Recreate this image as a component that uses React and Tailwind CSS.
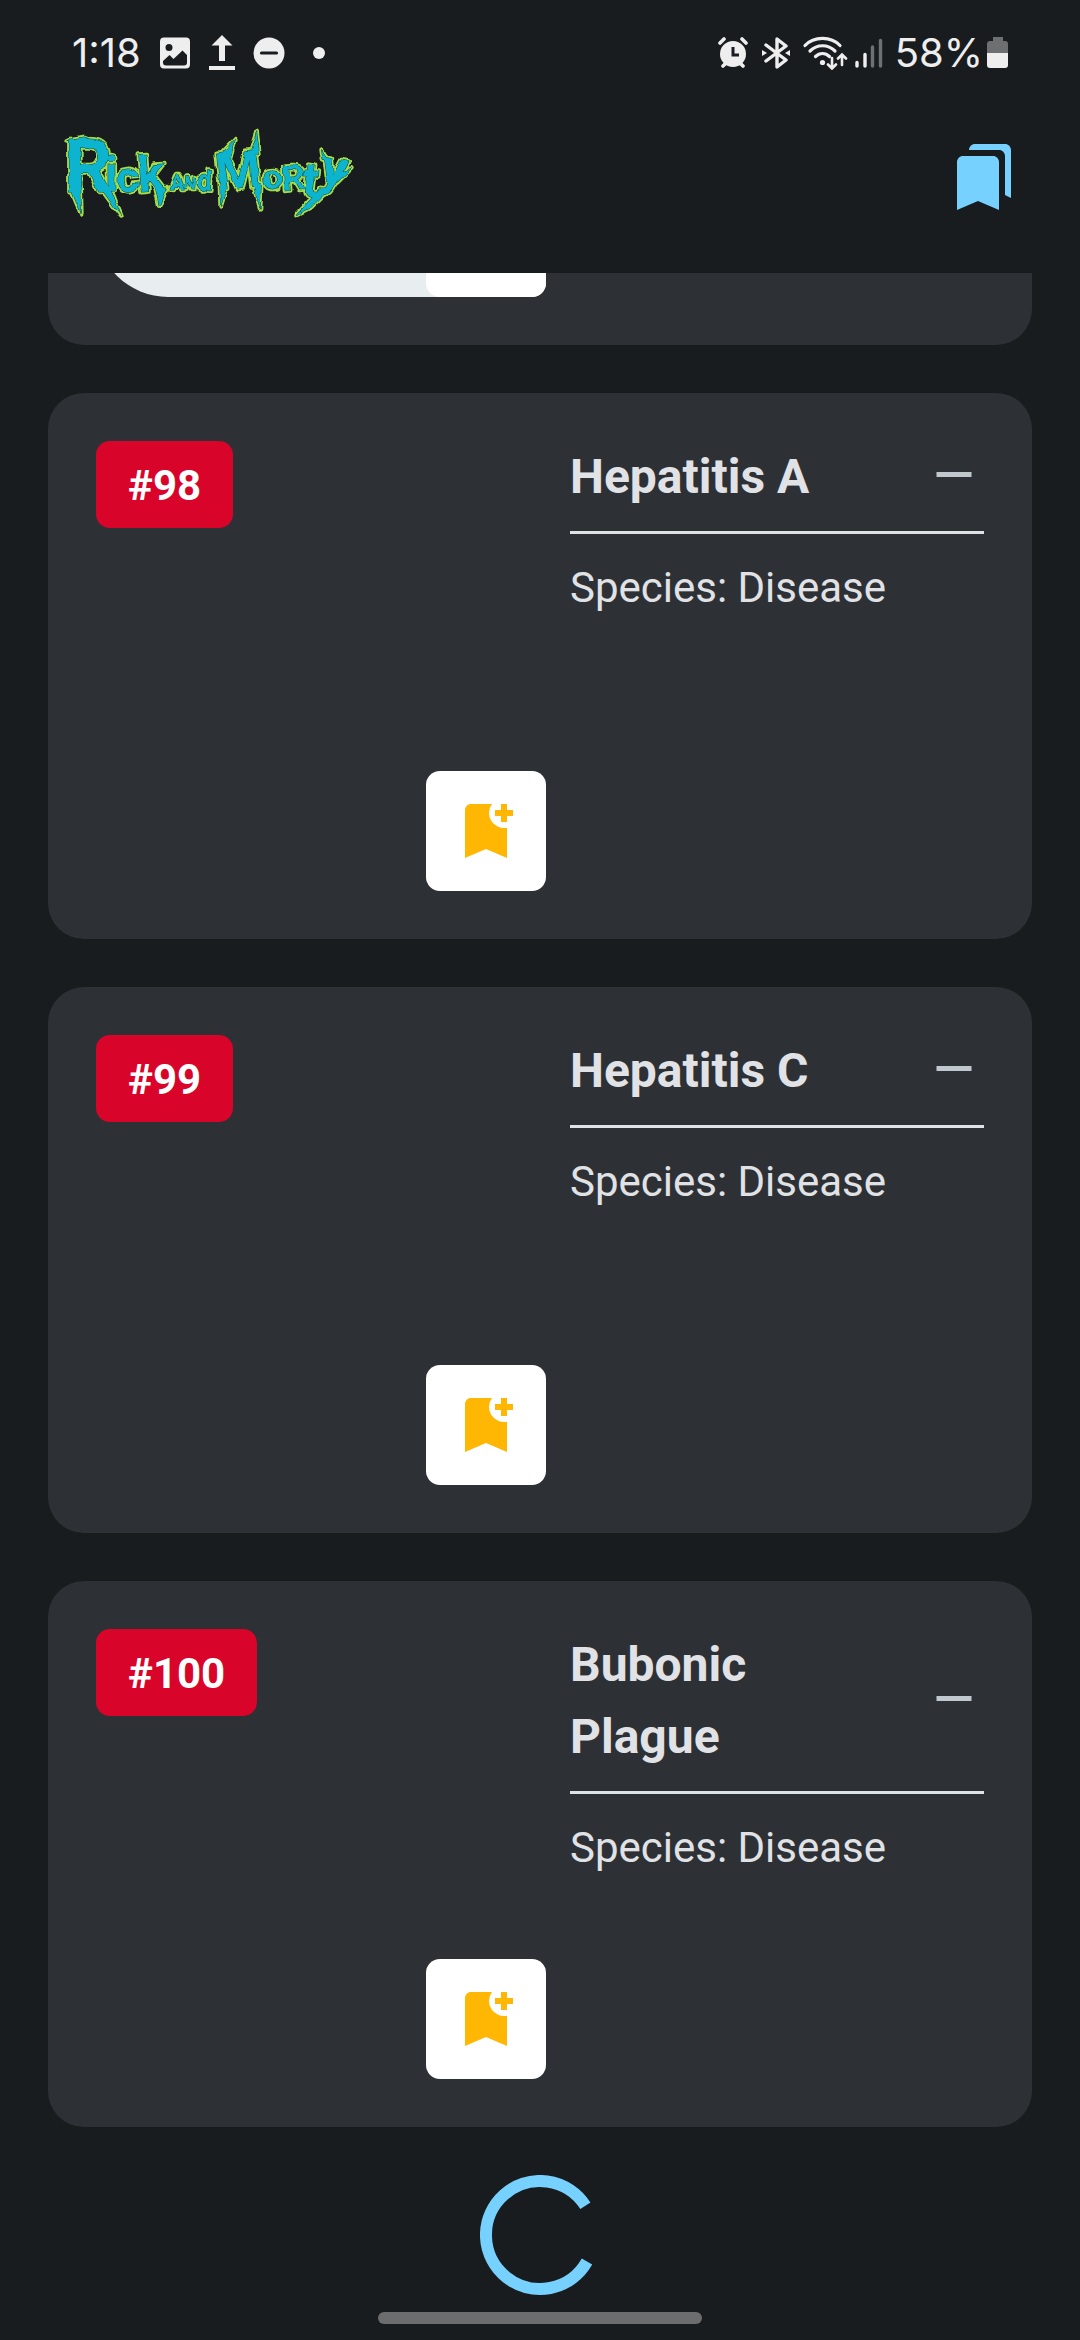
import React from "react";

const characters = [
  { id: 98, name: "Hepatitis A", species: "Disease" },
  { id: 99, name: "Hepatitis C", species: "Disease" },
  { id: 100, name: "Bubonic Plague", species: "Disease" },
];

function StatusBar() {
  return (
    <div className="flex h-[81px] items-center justify-between pt-6 pr-[71px] pl-[72px] text-[#eeeeee]">
      <div className="flex items-center">
        <span className="font-['Inter',sans-serif] text-[40px] leading-none">1:18</span>
        <svg className="ml-[18px] size-8" viewBox="0 0 32 32" aria-hidden="true">
          <path fill="currentColor" fillRule="evenodd" d="M5 0.500h22a4 4 0 0 1 4 4v23a4 4 0 0 1-4 4H5a4 4 0 0 1-4-4v-23a4 4 0 0 1 4-4zM10 7a3.500 3.500 0 1 0 0 7a3.500 3.500 0 0 0 0-7zM4 24v1.500a3 3 0 0 0 3 3h18a3 3 0 0 0 3-3V18l-4.500-4.500L14.500 22l-4-4z" />
        </svg>
        <svg className="ml-[18px] h-9 w-[26px]" viewBox="0 0 26 36" aria-hidden="true">
          <path fill="currentColor" d="M13 0l10.500 10.500H16V26h-6V10.500H2.500zM0 31h26v4H0z" />
        </svg>
        <svg className="ml-[18px] size-8" viewBox="0 0 32 32" aria-hidden="true">
          <circle cx="16" cy="16" r="15.500" fill="currentColor" />
          <path d="M8.500 16h15" stroke="#191c1e" strokeWidth="3.200" strokeLinecap="round" />
        </svg>
        <span className="ml-7 size-3 rounded-full bg-[#eeeeee]" />
      </div>
      <div className="flex items-center">
        <svg className="h-8 w-[30px]" viewBox="0 0 30 32" aria-hidden="true">
          <circle cx="15" cy="17" r="13" fill="currentColor" />
          <path d="M2 6l4-4M28 6l-4-4M5 29l3-3M25 29l-3-3" stroke="currentColor" strokeWidth="3.600" strokeLinecap="round" />
          <path d="M15 10v8h6" fill="none" stroke="#191c1e" strokeWidth="3" />
        </svg>
        <svg className="ml-[14px] h-8 w-7" viewBox="0 0 28 32" aria-hidden="true">
          <path d="M4 8l20 15-9 7V2l9 7L4 24" fill="none" stroke="currentColor" strokeWidth="3.400" strokeLinejoin="round" strokeLinecap="round" />
          <path fill="currentColor" d="M0 13l5 3-5 3zM28 13l-5 3 5 3z" />
        </svg>
        <svg className="ml-3 h-[34px] w-[46px]" viewBox="0 0 46 34" aria-hidden="true">
          <g fill="none" stroke="currentColor" strokeLinecap="round">
            <path d="M3 9.500c9-9.500 26-9.500 35 0M8 15c7-7 18-7 25 0M13.500 20.500c4-4 10-4 14 0" strokeWidth="3.200" />
            <path d="M30 22v10M26 28.500l4 4 4-4M40 29V19M36 22.500l4-4 4 4" strokeWidth="2.600" />
          </g>
          <circle cx="20.500" cy="26.500" r="2.600" fill="currentColor" />
        </svg>
        <svg className="ml-[7px] h-[30px] w-7" viewBox="0 0 28 30" aria-hidden="true">
          <g stroke="currentColor" strokeWidth="3.400" strokeLinecap="round">
            <path d="M2 24.500v3.500M10 16.500V28" />
            <path d="M17.500 9v19M25.500 2.500V28" opacity=".4" />
          </g>
        </svg>
        <span className="ml-3 font-['Inter',sans-serif] text-[40px] leading-none">58%</span>
        <svg className="ml-1 h-8 w-[22px]" viewBox="0 0 22 32" aria-hidden="true">
          <path fill="#6d6f71" d="M6 0h10v4h2a3 3 0 0 1 3 3v9H0V7a3 3 0 0 1 3-3h3z" />
          <path fill="currentColor" d="M0 16h21v12a3 3 0 0 1-3 3H3a3 3 0 0 1-3-3z" />
        </svg>
      </div>
    </div>
  );
}

const letters = [
  { c: "R", x: 44, y: 226, s: 222, r: 0 },
  { c: "i", x: 166, y: 220, s: 140, r: 0 },
  { c: "c", x: 204, y: 228, s: 128, r: -6 },
  { c: "k", x: 266, y: 226, s: 150, r: -4 },
  { c: "A", x: 360, y: 220, s: 68, r: 0 },
  { c: "N", x: 402, y: 214, s: 50, r: 4 },
  { c: "d", x: 438, y: 218, s: 84, r: 4 },
  { c: "M", x: 502, y: 222, s: 156, r: -6 },
  { c: "o", x: 638, y: 216, s: 106, r: 0 },
  { c: "R", x: 698, y: 222, s: 106, r: -4 },
  { c: "t", x: 752, y: 236, s: 148, r: 6 },
  { c: "y", x: 806, y: 196, s: 150, r: 12 },
];

function LogoLayer({ className, strokeWidth }) {
  return (
    <g className={className} strokeWidth={strokeWidth} strokeLinejoin="round">
      {letters.map((l) => (
        <text key={l.c + l.x} x={l.x} y={l.y} fontSize={l.s} transform={`rotate(${l.r} ${l.x} ${l.y})`}>
          {l.c}
        </text>
      ))}
      <path d="M60 210L94 292L92 210ZM142 200L214 298L180 210ZM316 210L328 266L350 210ZM510 210L512 268L530 210ZM610 204L630 274L634 200ZM600 110L620 44L628 110ZM520 104L556 66L540 124ZM740 294L812 214L840 214L782 272ZM866 170L904 154L862 196ZM816 130L812 98L832 130ZM50 70L100 60L140 76Z" />
    </g>
  );
}

function Logo() {
  return (
    <svg className="h-[120px] w-80 font-['Roboto',sans-serif] font-bold" viewBox="0 0 960 360" role="img" aria-label="Rick and Morty">
      <defs>
        <filter id="jagged" x="-5%" y="-5%" width="110%" height="110%">
          <feTurbulence type="fractalNoise" baseFrequency="0.04" numOctaves="1" seed="4" result="noise" />
          <feDisplacementMap in="SourceGraphic" in2="noise" scale="16" xChannelSelector="R" yChannelSelector="G" />
        </filter>
      </defs>
      <g filter="url(#jagged)">
        <LogoLayer className="fill-[#a6dd4c] stroke-[#a6dd4c]" strokeWidth={14} />
        <LogoLayer className="fill-[#114b45] stroke-[#114b45]" strokeWidth={3} />
        <LogoLayer className="fill-[#08b4d0] stroke-none" strokeWidth={0} />
      </g>
    </svg>
  );
}

function Header() {
  return (
    <header className="flex h-48 items-center justify-between pr-[60px] pl-[50px]">
      <Logo />
      <button type="button" aria-label="Bookmarks" className="text-[#77d1ff]">
        <svg className="size-[72px]" viewBox="0 0 24 24" fill="currentColor" aria-hidden="true">
          <path d="M19 18l2 1V3c0-1.100-.9-2-2-2H9C7.900 1 7 1.900 7 3h10c1.100 0 2 .9 2 2v13zM15 5H5c-1.100 0-2 .9-2 2v16l7-3 7 3V7c0-1.100-.9-2-2-2z" />
        </svg>
      </button>
    </header>
  );
}

function CharacterCard({ id, name, species }) {
  return (
    <article className="flex gap-6 rounded-[36px] bg-[#2d3135] p-12">
      <div className="flex h-[450px] w-[450px] shrink-0 flex-col items-start justify-between">
        <span className="rounded-[14px] bg-[#d90429] px-8 pt-[3px] text-[42px] leading-[84px] font-bold text-white">#{id}</span>
        <button
          type="button"
          aria-label={`Add ${name} to bookmarks`}
          className="flex size-[120px] items-center justify-center self-end rounded-[14px] bg-white text-[#ffb703]"
        >
          <svg className="size-[72px]" viewBox="0 0 24 24" fill="currentColor" aria-hidden="true">
            <path d="M21 7h-2v2h-2V7h-2V5h2V3h2v2h2v2zm-2 14l-7-3-7 3V5c0-1.100.9-2 2-2h7a5.002 5.002 0 0 0 5 7.900V21z" />
          </svg>
        </button>
      </div>
      <div className="min-w-0 flex-1">
        <div className="flex items-center justify-between border-b-[3px] border-[#dee3e6] pb-[18px]">
          <h2 className="w-[280px] text-[48px] leading-[72px] font-bold text-[#e1e2e5]">{name}</h2>
          <svg className="size-[60px] shrink-0 text-[#c0c7cd]" viewBox="0 0 24 24" fill="currentColor" aria-hidden="true">
            <path d="M19 12H5v-2h14z" />
          </svg>
        </div>
        <p className="mt-6 text-[42px] leading-[60px] text-[#e1e2e5]">Species: {species}</p>
      </div>
    </article>
  );
}

/* Lower edge of the card that has scrolled under the header. */
function ScrolledCard() {
  return (
    <div className="flex h-[72px] flex-col justify-end overflow-hidden" aria-hidden="true">
      <div className="shrink-0 rounded-b-[36px] bg-[#2d3135] px-12 pb-12">
        <div className="flex h-[150px] w-[450px] items-end justify-end rounded-bl-[72px] rounded-br-[14px] bg-[#e8edf0]">
          <div className="size-[120px] rounded-[14px] bg-white" />
        </div>
      </div>
    </div>
  );
}

export default function App() {
  return (
    <div className="flex min-h-screen flex-col bg-[#191c1e] font-['Roboto',sans-serif]">
      <StatusBar />
      <Header />
      <main className="flex flex-col gap-12 px-12">
        <ScrolledCard />
        {characters.map((c) => (
          <CharacterCard key={c.id} {...c} />
        ))}
        <svg className="size-[120px] self-center" viewBox="0 0 120 120" role="img" aria-label="Loading">
          <path d="M105.400 30.800A54 54 0 1 0 107 86.500" fill="none" stroke="#77d1ff" strokeWidth="12" />
        </svg>
      </main>
      <div className="mt-auto mb-4 h-3 w-[324px] self-center rounded-full bg-[#6c6d6f]" />
    </div>
  );
}
